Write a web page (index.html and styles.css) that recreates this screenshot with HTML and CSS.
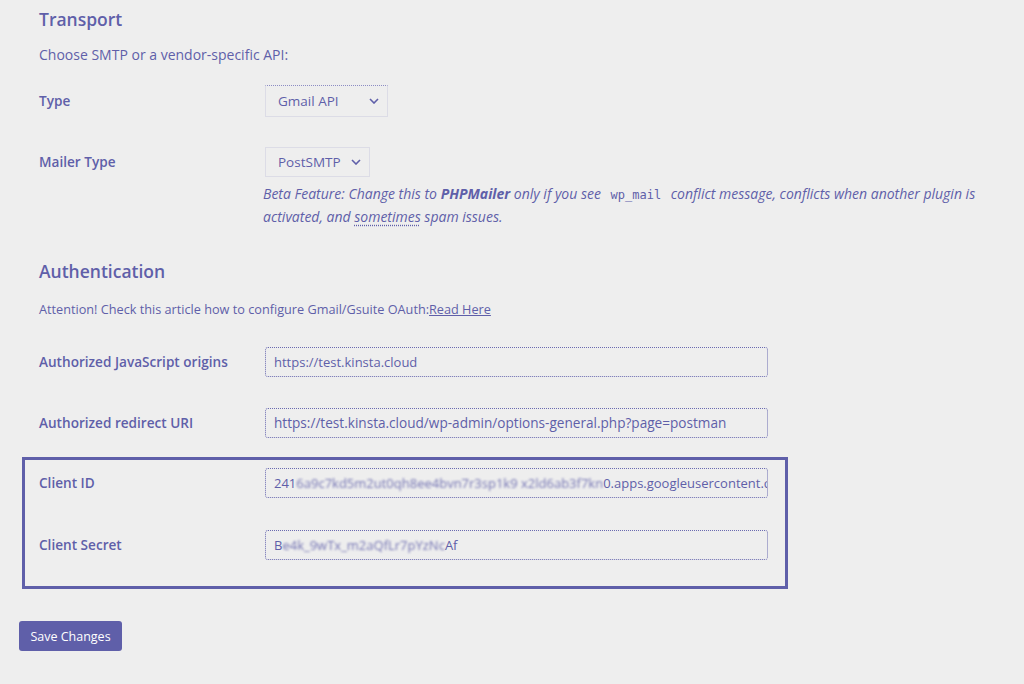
FILE: index.html
```html
<!DOCTYPE html>
<html>
<head>
<meta charset="utf-8">
<link rel="stylesheet" href="styles.css">
</head>
<body>
<div class="page">
  <section class="section">
    <h2 class="heading heading-first">Transport</h2>
    <p class="intro">Choose SMTP or a vendor-specific API:</p>
    <div class="row row-type">
      <div class="label">Type</div>
      <div class="field">
        <div class="select select-type"><span>Gmail API</span>
          <svg class="chev" width="10" height="6" viewBox="0 0 10 6"><path d="M1 1 L5 5 L9 1" fill="none" stroke="#5f5fa9" stroke-width="1.6"/></svg>
        </div>
      </div>
    </div>
    <div class="row row-mailer">
      <div class="label">Mailer Type</div>
      <div class="field">
        <div class="select select-mailer"><span>PostSMTP</span>
          <svg class="chev" width="10" height="6" viewBox="0 0 10 6"><path d="M1 1 L5 5 L9 1" fill="none" stroke="#5f5fa9" stroke-width="1.6"/></svg>
        </div>
        <p class="desc">Beta Feature: Change this to <b>PHPMailer</b> only if you see <code>wp_mail</code> conflict message, conflicts when another plugin is activated, and <span class="dotted">sometimes</span> spam issues.</p>
      </div>
    </div>
  </section>

  <section class="section">
    <h2 class="heading heading-auth">Authentication</h2>
    <p class="intro intro-auth">Attention! Check this article how to configure Gmail/Gsuite OAuth:<a href="#" class="link">Read Here</a></p>
    <div class="row row-input row-first">
      <div class="label">Authorized JavaScript origins</div>
      <div class="field"><div class="input">https://test.kinsta.cloud</div></div>
    </div>
    <div class="row row-input">
      <div class="label">Authorized redirect URI</div>
      <div class="field"><div class="input input-long">https://test.kinsta.cloud/wp-admin/options-general.php?page=postman</div></div>
    </div>
    <div class="highlight">
      <div class="row row-input row-box">
        <div class="label">Client ID</div>
        <div class="field"><div class="input">241<span class="blur">6a9c7kd5m2ut0qh8ee4bvn7r3sp1k9</span> <span class="blur">x2ld6ab3f7kn</span>0.apps.googleusercontent.com</div></div>
      </div>
      <div class="row row-input row-box">
        <div class="label">Client Secret</div>
        <div class="field"><div class="input">B<span class="blur">e4k_9wTx_m2aQfLr7pYzNc</span>Af</div></div>
      </div>
    </div>
  </section>

  <button class="save">Save Changes</button>
</div>
</body>
</html>
```

FILE: styles.css
```css
html, body {
  margin: 0;
  padding: 0;
  background: #eeeeee;
}
body {
  font-family: "Open Sans", "Noto Sans", sans-serif;
  font-size: 13px;
  color: #5f5fa9;
  width: 1024px;
  height: 684px;
  overflow: hidden;
}
.page {
  padding: 0 0 0 19px;
}
.section {
  padding-left: 20px;
}
.heading {
  font-size: 17.5px;
  font-weight: 600;
  line-height: 24px;
  margin: 0;
}
.heading-first {
  padding-top: 7px;
}
.intro {
  margin: 14px 0 0 0;
  line-height: 20px;
  font-size: 14px;
}
.row {
  display: flex;
  align-items: flex-start;
}
.label {
  width: 226px;
  flex: none;
  font-weight: 600;
  font-size: 13.6px;
  line-height: 20px;
}
.field {
  flex: none;
}
.row-type {
  margin-top: 20px;
}
.row-type .label {
  margin-top: 6px;
}
.select {
  display: flex;
  align-items: center;
  justify-content: space-between;
  box-sizing: border-box;
  padding: 0 8px 0 12px;
  border: 1px solid #dcdce6;
  border-top: 1px dotted #8c8cc4;
  font-size: 13.5px;
}
.select-type {
  width: 123px;
  height: 32px;
}
.select-mailer {
  width: 105px;
  height: 30px;
  border-top-color: #dcdce6;
  border-top-style: solid;
}
.chev {
  display: block;
}
.row-mailer {
  margin-top: 30px;
}
.row-mailer .label {
  margin-top: 5px;
}
.desc {
  margin: 6px 0 0 -2px;
  width: 722px;
  font-style: italic;
  font-size: 14px;
  line-height: 22px;
}
.desc code {
  font-family: "DejaVu Sans Mono", monospace;
  font-style: normal;
  font-size: 12px;
  padding: 0 6px;
}
.dotted {
  text-decoration: underline dotted;
  text-underline-offset: 3px;
}
.heading-auth {
  margin-top: 31px;
}
.intro-auth {
  margin-top: 16px;
  font-size: 12.7px;
}
.link {
  color: #5f5fa9;
  text-decoration: underline;
}
.row-input .label {
  margin-top: 5px;
}
.input {
  box-sizing: border-box;
  width: 503px;
  height: 30px;
  line-height: 28px;
  padding: 0 8px;
  border: 1px dotted #6a6ab0;
  border-radius: 3px;
  font-size: 13px;
  white-space: nowrap;
  overflow: hidden;
}
.input-long {
  font-size: 13.6px;
}
.row-first {
  margin-top: 28px;
}
.row-input + .row-input {
  margin-top: 31px;
}
.highlight {
  margin: 19px 0 0 -17px;
  width: 766px;
  height: 132px;
  box-sizing: border-box;
  border: 3px solid #5f5fa9;
  padding: 8px 0 0 14px;
}
.highlight .row-box + .row-box {
  margin-top: 32px;
}
.blur {
  filter: blur(1.2px);
  opacity: 0.85;
}
.save {
  display: block;
  margin-top: 32px;
  width: 103px;
  height: 30px;
  background: #5f5fa9;
  color: #ffffff;
  border: none;
  border-radius: 3px;
  font-family: "Open Sans", "Noto Sans", sans-serif;
  font-size: 12.5px;
  padding: 0;
}
```
